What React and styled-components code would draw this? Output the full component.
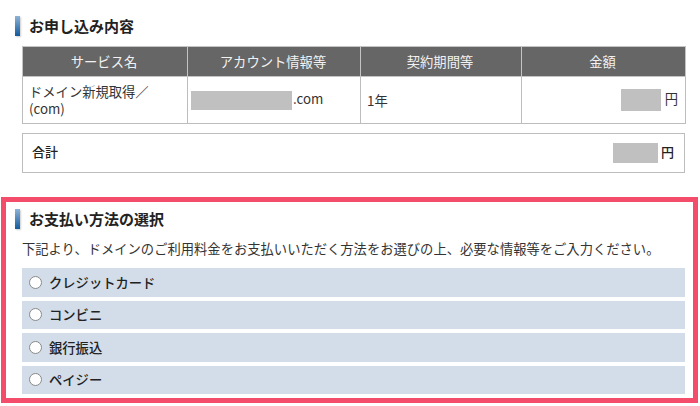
import styled, { createGlobalStyle } from 'styled-components'

const GlobalStyle = createGlobalStyle`
  html, body {
    margin: 0;
    padding: 0;
    background: #fff;
  }
  body {
    width: 700px;
    height: 406px;
    overflow: hidden;
    font-family: "Noto Sans CJK JP", "Liberation Sans", sans-serif;
    color: #333;
  }
`

const Page = styled.div`
  display: flex;
  flex-direction: column;
  padding-top: 16px;
`

const OrderSection = styled.section`
  padding: 0 15px 0 15px;
  height: 181px;
`

const Heading = styled.h2`
  display: flex;
  align-items: center;
  gap: 9px;
  height: 20px;
  margin: 0 0 10px;
  font-size: 15px;
  font-weight: 700;
  line-height: 20px;
  color: #222;

  &::before {
    content: '';
    width: 5px;
    height: 20px;
    background: linear-gradient(180deg, #8fb3d6, #135a9c);
    box-shadow: 1px 1px 2px rgba(0, 0, 0, 0.2);
  }
`

const Table = styled.table`
  width: 663px;
  margin-left: 7px;
  border-collapse: collapse;
  table-layout: fixed;
  font-size: 13.3px;
`

const Th = styled.th`
  height: 29px;
  padding: 0 2px 0 0;
  background: #666;
  border: 1px solid #c4c4c4;
  color: #f2f2f2;
  font-weight: 400;
  text-align: center;
`

const Td = styled.td`
  height: 46px;
  padding: ${(p) => (p.$tight ? '0 3px' : p.$right ? '0 7px 0 0' : '0 6px')};
  border: 1px solid #bdbdbd;
  line-height: 17px;
  text-align: ${(p) => (p.$right ? 'right' : 'left')};
`

const Mask = styled.span`
  display: inline-block;
  width: ${(p) => p.$w}px;
  height: ${(p) => p.$h}px;
  margin-right: ${(p) => p.$gap}px;
  background: #c0c0c0;
  vertical-align: middle;
`

const TotalBox = styled.div`
  display: flex;
  align-items: center;
  justify-content: space-between;
  width: 663px;
  height: 40px;
  box-sizing: border-box;
  margin: 9px 0 0 7px;
  padding: 0 10px 0 9px;
  border: 1px solid #bdbdbd;
  font-size: 13px;
  font-weight: 500;
  color: #222;
`

const TotalText = styled.span`
  padding-bottom: 3px;
`

const Amount = styled.span`
  display: flex;
  align-items: center;
`

const PaymentPanel = styled.section`
  width: 697px;
  height: 206px;
  box-sizing: border-box;
  margin-left: 1px;
  padding: 7px 9px 0 9px;
  border: 5px solid #f44d6b;
`

const Intro = styled.p`
  margin: 0 0 9px 7px;
  font-size: 13.3px;
  line-height: 20px;
  color: #333;
`

const MethodList = styled.div`
  display: flex;
  flex-direction: column;
  gap: 4px;
  width: 663px;
  margin-left: 7px;
`

const MethodRow = styled.label`
  display: flex;
  align-items: center;
  gap: 7px;
  height: 28.5px;
  padding-left: 7px;
  background: #d2dde9;
  font-size: 13.3px;
  font-weight: 500;
  color: #222;
`

const Radio = styled.span`
  width: 11px;
  height: 11px;
  border: 1px solid #8a8a8a;
  border-radius: 50%;
  background: #fff;
`

const METHODS = ['クレジットカード', 'コンビニ', '銀行振込', 'ペイジー']

export default function App() {
  return (
    <>
      <GlobalStyle />
      <Page>
        <OrderSection>
          <Heading>お申し込み内容</Heading>
          <Table>
            <colgroup>
              <col style={{ width: 165 }} />
              <col style={{ width: 173 }} />
              <col style={{ width: 161 }} />
              <col style={{ width: 164 }} />
            </colgroup>
            <thead>
              <tr>
                <Th>サービス名</Th>
                <Th>アカウント情報等</Th>
                <Th>契約期間等</Th>
                <Th>金額</Th>
              </tr>
            </thead>
            <tbody>
              <tr>
                <Td>ドメイン新規取得／<br />(com)</Td>
                <Td $tight><Mask $w={101} $h={19} $gap={1} />.com</Td>
                <Td>1年</Td>
                <Td $right><Mask $w={40} $h={22} $gap={4} />円</Td>
              </tr>
            </tbody>
          </Table>
          <TotalBox>
            <TotalText>合計</TotalText>
            <Amount><Mask $w={45} $h={20} $gap={3} /><TotalText>円</TotalText></Amount>
          </TotalBox>
        </OrderSection>
        <PaymentPanel>
          <Heading>お支払い方法の選択</Heading>
          <Intro>下記より、ドメインのご利用料金をお支払いいただく方法をお選びの上、必要な情報等をご入力ください。</Intro>
          <MethodList>
            {METHODS.map((name) => (
              <MethodRow key={name}>
                <Radio />
                {name}
              </MethodRow>
            ))}
          </MethodList>
        </PaymentPanel>
      </Page>
    </>
  )
}
